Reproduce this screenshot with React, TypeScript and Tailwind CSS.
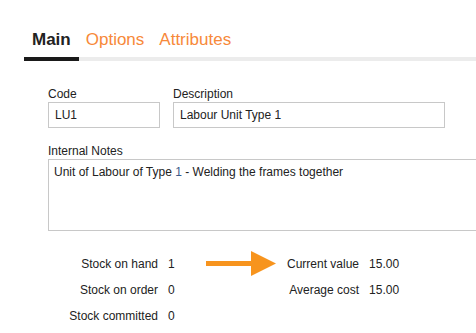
const stockLeft = [
  { label: "Stock on hand", value: "1" },
  { label: "Stock on order", value: "0" },
  { label: "Stock committed", value: "0" },
];

const stockRight = [
  { label: "Current value", value: "15.00" },
  { label: "Average cost", value: "15.00" },
];

export default function App() {
  return (
    <div className="h-[333px] w-[476px] overflow-hidden bg-white text-[12px] text-[#222] [font-family:'Liberation_Sans',Arial,sans-serif]">
      {/* Tabs */}
      <div className="flex pl-6 pt-[30px]">
        <div className="border-b-[4px] border-[#1a1a1a] px-2 pb-[7px] text-[17px] font-bold leading-5">Main</div>
        <div className="flex flex-1 gap-[15px] border-b-[4px] border-[#ececec] pb-[7px] pl-[7px] text-[17px] leading-5 text-[#f7893a]">
          <span>Options</span>
          <span>Attributes</span>
        </div>
      </div>

      {/* Form */}
      <div className="pl-12 pt-[26px]">
        <div className="flex gap-[13px]">
          <div className="flex flex-col">
            <label className="leading-[14px]">Code</label>
            <div className="mt-[1px] flex h-[26px] w-[112px] items-center border border-[#c8c8c8] px-[6px]">LU1</div>
          </div>
          <div className="flex flex-col">
            <label className="leading-[14px]">Description</label>
            <div className="mt-[1px] flex h-[26px] w-[272px] items-center border border-[#c8c8c8] px-[6px]">Labour Unit Type 1</div>
          </div>
        </div>

        <label className="mt-[16px] block leading-[14px]">Internal Notes</label>
        <div className="mt-[1px] h-[72px] w-[440px] border border-[#c8c8c8] px-[5px] pt-[4px] leading-[16px]">
          Unit of Labour of Type <span className="text-[#3a5a8a]">1</span> - Welding the frames together
        </div>

        {/* Stock */}
        <div className="-ml-12 mt-[26px] flex">
          <div className="grid w-[180px] grid-cols-[158px_auto] gap-x-[10px] gap-y-[12px] leading-[14px]">
            {stockLeft.map((row) => (
              <div key={row.label} className="contents">
                <span className="text-right">{row.label}</span>
                <span>{row.value}</span>
              </div>
            ))}
          </div>
          <div className="ml-[26px] flex h-[25px] w-[70px] -translate-y-[6px] items-center">
            <svg width="70" height="25" viewBox="0 0 70 25">
              <rect x="0" y="10" width="46" height="5" fill="#f7941e" />
              <polygon points="45,0 70,12.5 45,25" fill="#f7941e" />
            </svg>
          </div>
          <div className="ml-[11px] grid grid-cols-[auto_auto] gap-x-[10px] gap-y-[12px] self-start whitespace-nowrap leading-[14px]">
            {stockRight.map((row) => (
              <div key={row.label} className="contents">
                <span className="text-right">{row.label}</span>
                <span>{row.value}</span>
              </div>
            ))}
          </div>
        </div>
      </div>
    </div>
  );
}
